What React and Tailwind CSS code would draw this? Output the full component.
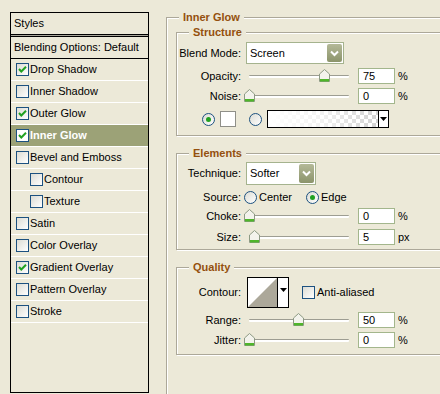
import React from "react";

const layers = [
  { label: "Drop Shadow", checked: true },
  { label: "Inner Shadow" },
  { label: "Outer Glow", checked: true },
  { label: "Inner Glow", checked: true, selected: true },
  { label: "Bevel and Emboss" },
  { label: "Contour", indent: true },
  { label: "Texture", indent: true },
  { label: "Satin" },
  { label: "Color Overlay" },
  { label: "Gradient Overlay", checked: true },
  { label: "Pattern Overlay" },
  { label: "Stroke" },
];

function Checkbox({ checked, white }) {
  return (
    <div
      className={
        "w-[13px] h-[13px] shrink-0 border border-[#1c5180] flex items-center justify-center " +
        (white ? "bg-white" : "bg-linear-to-br from-[#dcdcd4] to-white")
      }
    >
      {checked && (
        <svg width="11" height="11" viewBox="0 0 11 11">
          <path d="M2 5 L4.3 7.5 L9 2.8" fill="none" stroke="#21a121" strokeWidth="2" />
        </svg>
      )}
    </div>
  );
}

function Radio({ checked }) {
  return (
    <div className="w-[13px] h-[13px] shrink-0 rounded-full border border-[#1c5180] bg-linear-to-br from-[#dcdcd4] to-white flex items-center justify-center">
      {checked && <div className="w-[5px] h-[5px] rounded-full bg-[#21a121]" />}
    </div>
  );
}

function Chevron() {
  return (
    <div className="w-[15px] h-full shrink-0 rounded-[2px] bg-linear-to-b from-[#b4b998] to-[#8c946b] flex items-center justify-center">
      <svg width="9" height="7" viewBox="0 0 9 7">
        <path d="M1 1.5 L4.5 5 L8 1.5" fill="none" stroke="white" strokeWidth="2" />
      </svg>
    </div>
  );
}

function Select({ value, w }) {
  return (
    <div className={"flex items-center bg-white border border-[#a5b38e] p-[1px] " + w}>
      <div className="flex-1 pl-[2px]">{value}</div>
      <Chevron />
    </div>
  );
}

function Thumb() {
  return (
    <svg width="11" height="13" viewBox="0 0 11 13">
      <path d="M0.5 5 L5.5 0.5 L10.5 5 L10.5 12.5 L0.5 12.5 Z" fill="#f3f3ec" stroke="#8d9a84" />
      <rect x="1" y="10" width="9" height="2.5" fill="#4fb52b" />
    </svg>
  );
}

function Slider({ v }) {
  return (
    <div className="relative w-[111px] h-[16px] shrink-0 ml-[3px]">
      <div className="absolute left-[5px] right-[6px] top-[7px] h-[3px] border-t border-[#9d9d92] bg-white rounded-[1px]" />
      <div className="absolute top-[1px]" style={{ left: v }}>
        <Thumb />
      </div>
    </div>
  );
}

function Input({ value }) {
  return (
    <div className="w-[37px] h-[16px] shrink-0 ml-[3px] border border-[#a3b68c] bg-white flex items-center pl-[4px]">
      {value}
    </div>
  );
}

function Label({ children }) {
  return <div className="w-[64px] shrink-0 text-right">{children}</div>;
}

function SliderRow({ label, v, value, unit, mt }) {
  return (
    <div className={"flex items-center h-[16px] " + mt}>
      <Label>{label}</Label>
      <Slider v={v} />
      <Input value={value} />
      <div className="ml-[3px]">{unit}</div>
    </div>
  );
}

function Group({ title, className, children }) {
  return (
    <div
      className={
        "relative border border-[#aca899] shadow-[inset_1px_1px_0_#ffffff,1px_1px_0_#ffffff] " + className
      }
    >
      <div className="absolute left-[12px] -top-[8px] px-[4px] bg-[#ece9d8] font-bold text-[11px] leading-[14px] text-[#94500e]">
        {title}
      </div>
      {children}
    </div>
  );
}

function DropArrow() {
  return (
    <svg width="7" height="4" viewBox="0 0 7 4">
      <path d="M0 0 L7 0 L3.5 4 Z" fill="black" />
    </svg>
  );
}

export default function App() {
  return (
    <div className="w-[440px] h-[394px] overflow-hidden bg-[#ece9d8] flex items-start font-['Liberation_Sans',Arial,sans-serif] text-[11px] leading-[13px] text-black">
      {/* Left styles list */}
      <div className="ml-[10px] mt-[12px] w-[139px] h-[381px] shrink-0 border border-black flex flex-col">
        <div className="h-[21px] flex items-center pl-[3px]">Styles</div>
        <div className="h-[1px] bg-black" />
        <div className="h-[1px] bg-[#a8a69a]" />
        <div className="h-[1px] bg-black" />
        <div className="h-[21px] flex items-center pl-[3px]">Blending Options: Default</div>
        <div className="h-[1px] bg-black" />
        {layers.map((l) => (
          <div
            key={l.label}
            className={
              "h-[22px] border-b border-white flex items-center gap-[1px] " +
              (l.indent ? "pl-[19px] " : "pl-[5px] ") +
              (l.selected ? "bg-[#9ca277] text-white font-bold" : "")
            }
          >
            <Checkbox checked={l.checked} white={l.selected} />
            <span>{l.label}</span>
          </div>
        ))}
      </div>

      {/* Right panel */}
      <Group title="Inner Glow" className="ml-[17px] mt-[17px] w-[300px] h-[420px] shrink-0 pl-[9px] pt-[14px]">
        <Group title="Structure" className="w-[280px] h-[104px] pt-[9px]">
          <div className="flex items-center h-[22px]">
            <Label>Blend Mode:</Label>
            <div className="ml-[5px]">
              <Select value="Screen" w="w-[98px] h-[22px]" />
            </div>
          </div>
          <SliderRow label="Opacity:" v={75} value="75" unit="%" mt="mt-[4px]" />
          <SliderRow label="Noise:" v={0} value="0" unit="%" mt="mt-[4px]" />
          <div className="flex items-center h-[18px] mt-[6px]">
            <div className="ml-[25px]">
              <Radio checked />
            </div>
            <div className="ml-[5px] w-[16px] h-[16px] border border-[#8f8f88] bg-white" />
            <div className="ml-[13px]">
              <Radio />
            </div>
            <div className="ml-[5px] w-[122px] h-[18px] border border-black flex">
              <div className="flex-1 bg-[repeating-conic-gradient(#d2d2d2_0%_25%,#ffffff_0%_50%)] bg-[length:8px_8px]">
                <div className="w-full h-full bg-linear-to-r from-white via-white/70 to-white/0" />
              </div>
              <div className="w-[10px] border-l border-black bg-white flex items-center justify-center">
                <DropArrow />
              </div>
            </div>
          </div>
        </Group>

        <Group title="Elements" className="mt-[17px] w-[280px] h-[97px] pt-[8px]">
          <div className="flex items-center h-[23px]">
            <Label>Technique:</Label>
            <div className="ml-[5px]">
              <Select value="Softer" w="w-[70px] h-[23px]" />
            </div>
          </div>
          <div className="flex items-center h-[13px] mt-[6px]">
            <Label>Source:</Label>
            <div className="ml-[3px]">
              <Radio />
            </div>
            <span className="ml-[2px]">Center</span>
            <div className="ml-[14px]">
              <Radio checked />
            </div>
            <span className="ml-[2px]">Edge</span>
          </div>
          <SliderRow label="Choke:" v={0} value="0" unit="%" mt="mt-[4px]" />
          <SliderRow label="Size:" v={5} value="5" unit="px" mt="mt-[5px]" />
        </Group>

        <Group title="Quality" className="mt-[17px] w-[280px] h-[88px] pt-[9px]">
          <div className="flex items-center h-[31px]">
            <Label>Contour:</Label>
            <div className="ml-[6px] w-[42px] h-[31px] border border-black flex bg-white">
              <div className="flex-1">
                <svg width="29" height="29" viewBox="0 0 29 29" className="block">
                  <path d="M0 29 L29 0 L29 29 Z" fill="#aca89a" />
                </svg>
              </div>
              <div className="w-[11px] border-l border-black flex items-start justify-center pt-[10px]">
                <DropArrow />
              </div>
            </div>
            <div className="ml-[13px]">
              <Checkbox />
            </div>
            <span className="ml-[2px]">Anti-aliased</span>
          </div>
          <SliderRow label="Range:" v={49} value="50" unit="%" mt="mt-[4px]" />
          <SliderRow label="Jitter:" v={0} value="0" unit="%" mt="mt-[4px]" />
        </Group>
      </Group>
    </div>
  );
}
